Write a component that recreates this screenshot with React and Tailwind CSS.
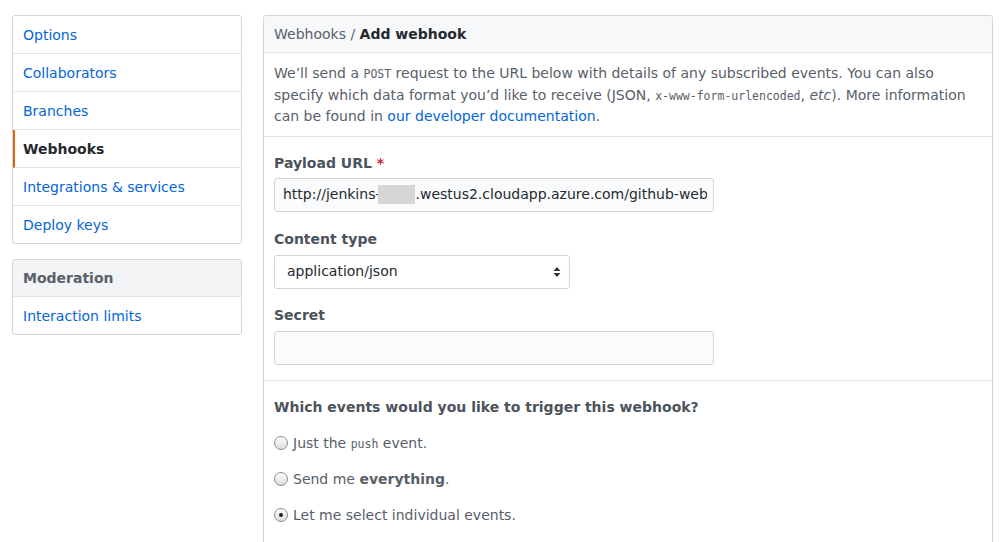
import React from 'react';

const SIDE_ITEMS = [
  { label: 'Options' },
  { label: 'Collaborators' },
  { label: 'Branches' },
  { label: 'Webhooks', selected: true },
  { label: 'Integrations & services' },
  { label: 'Deploy keys' }
];

const mono = { fontFamily: '"DejaVu Sans Mono", "Liberation Mono", monospace' };

/**
 * Fake native radio (grey gradient circle)
 */
const Radio = ({ checked }) => (
  <span className="inline-flex w-[14px] h-[14px] rounded-full border border-[#8c8c8c] bg-gradient-to-b from-white to-[#dcdcdc] items-center justify-center shrink-0">
    {checked && <span className="w-[4px] h-[4px] rounded-full bg-[#222]" />}
  </span>
);

const SideMenu = () => (
  <div className="border border-[#d1d5da] rounded-[3px] overflow-hidden">
    {SIDE_ITEMS.map((item, i) => {
      const last = i === SIDE_ITEMS.length - 1;
      return (
        <div
          key={item.label}
          className={
            'flex items-center pt-[2px] ' +
            (last ? 'h-[37px] ' : 'h-[38px] border-b border-[#e1e4e8] ') +
            (item.selected
              ? 'border-l-2 border-l-[#e36209] pl-[8px] font-bold text-[#24292e]'
              : 'pl-[10px] text-[#0366d6]')
          }
        >
          {item.label}
        </div>
      );
    })}
  </div>
);

export default function App() {
  return (
    <div
      className="flex gap-[21px] pl-[12px] pt-[15px] bg-white text-[14px] leading-[21px]"
      style={{ fontFamily: '"DejaVu Sans", "Liberation Sans", sans-serif' }}
    >
      {/* Sidebar */}
      <div className="w-[230px] shrink-0">
        <SideMenu />
        <div className="mt-[15px] border border-[#d1d5da] rounded-[3px] overflow-hidden">
          <div className="h-[37px] flex items-center pt-[1px] px-[10px] bg-[#f3f4f6] border-b border-[#e1e4e8] font-bold text-[#586069]">
            Moderation
          </div>
          <div className="h-[37px] flex items-center pt-[1px] px-[10px] text-[#0366d6]">Interaction limits</div>
        </div>
      </div>

      {/* Main box */}
      <div className="w-[730px] shrink-0 border border-[#d1d5da] rounded-[3px] pb-[40px]">
        <div className="h-[37px] flex items-center px-[10px] bg-[#f6f8fa] border-b border-[#e1e4e8] rounded-t-[3px]">
          <span className="text-[#586069]">Webhooks /&nbsp;</span>
          <span className="font-bold text-[#24292e]">Add webhook</span>
        </div>

        <p className="px-[10px] pt-[10px] pb-[8px] leading-[21.5px] text-[#586069] border-b border-[#e1e4e8]">
          We’ll send a <span className="text-[11.5px] leading-none" style={mono}>POST</span> request to the URL below
          with details of any subscribed events. You can also specify which data format you’d like to receive (JSON,{' '}
          <span className="text-[11.5px] leading-none" style={mono}>x-www-form-urlencoded</span>, <em>etc</em>). More
          information can be found in <span className="text-[#0366d6]">our developer documentation</span>.
        </p>

        {/* Form */}
        <div className="px-[10px] pt-[16px] pb-[15px] border-b border-[#e1e4e8]">
          <div className="font-bold text-[#4b535c] mb-[4px]">
            Payload URL <span className="text-[#cb2431]">*</span>
          </div>
          <div className="w-[440px] h-[34px] flex items-center pl-[8px] pr-[6px] bg-[#fafbfc] border border-[#d1d5da] rounded-[3px] text-[#24292e]">
            <div className="flex-1 flex items-center whitespace-nowrap overflow-hidden">
              http://jenkins-
              <span className="inline-block w-[37px] h-[19px] -ml-[2px] bg-[#d6d6d6] shrink-0" />
              .westus2.cloudapp.azure.com/github-webhook/
            </div>
          </div>

          <div className="font-bold text-[#4b535c] mt-[17px] mb-[5px]">Content type</div>
          <div className="w-[296px] h-[34px] flex items-center justify-between pl-[12px] pr-[8px] bg-white border border-[#d1d5da] rounded-[3px] text-[#24292e]">
            <span>application/json</span>
            <svg width="8" height="12" viewBox="0 0 8 12">
              <path d="M4 1 L7.5 5 L0.5 5 Z" fill="#333" />
              <path d="M4 11 L7.5 7 L0.5 7 Z" fill="#333" />
            </svg>
          </div>

          <div className="font-bold text-[#4b535c] mt-[16px] mb-[5px]">Secret</div>
          <div className="w-[440px] h-[34px] bg-[#fafbfc] border border-[#d1d5da] rounded-[3px]" />
        </div>

        {/* Events */}
        <div className="px-[10px] pt-[16px] text-[#586069]">
          <div className="font-bold text-[#4b535c]">Which events would you like to trigger this webhook?</div>
          <div className="mt-[15px] flex flex-col gap-[15px]">
            <label className="flex items-center gap-[5px]">
              <Radio />
              <span>
                Just the <span className="text-[11.5px] leading-none" style={mono}>push</span> event.
              </span>
            </label>
            <label className="flex items-center gap-[5px]">
              <Radio />
              <span>
                Send me <strong className="font-bold">everything</strong>.
              </span>
            </label>
            <label className="flex items-center gap-[5px]">
              <Radio checked />
              <span>Let me select individual events.</span>
            </label>
          </div>
        </div>
      </div>
    </div>
  );
}
